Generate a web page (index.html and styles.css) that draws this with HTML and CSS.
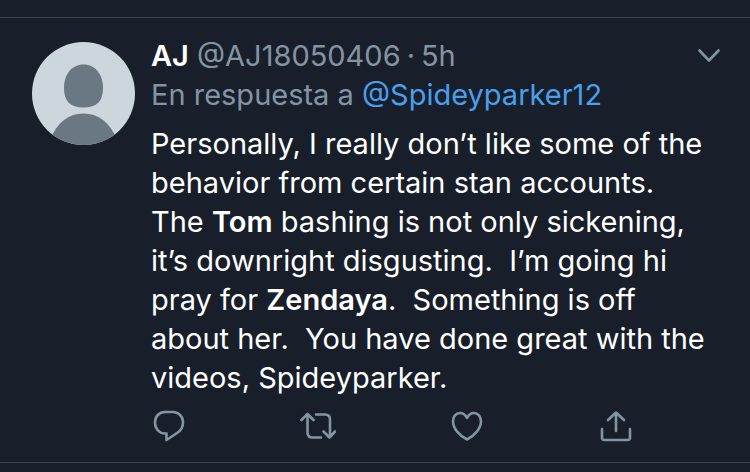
FILE: index.html
```
<!DOCTYPE html>
<html lang="es">

<head>
    <meta charset="utf-8">
    <meta name="viewport" content="width=device-width, initial-scale=1">
    <title>Tweet</title>
    <link rel="stylesheet" href="styles.css">
</head>

<body>
    <article class="tweet">
        <svg class="avatar" viewBox="0 0 103 103" aria-hidden="true">
            <defs>
                <clipPath id="circle">
                    <circle cx="51.5" cy="51.5" r="51.5" />
                </clipPath>
            </defs>
            <g clip-path="url(#circle)">
                <rect width="103" height="103" fill="#ccd6dd" />
                <path fill="#697882" d="M51.500 22.500C63 22.500 71 32 71 46C71 59 65 65.500 51.500 65.500S32 59 32 46C32 32 40 22.500 51.500 22.500Z" />
                <path fill="#697882" d="M18 98C25 80 37 71.500 51.500 71.500S78 80 85 98V103H18Z" />
            </g>
        </svg>
        <div class="content">
            <header class="header">
                <div class="author"><strong>AJ</strong> @AJ18050406<span class="dot">·</span>5h</div>
                <button class="more" type="button" aria-label="Más opciones">
                    <svg width="22" height="14" viewBox="0 0 22 14">
                        <path d="M1.500 1.500L11 11.500L20.500 1.500" />
                    </svg>
                </button>
            </header>
            <div class="reply-to">En respuesta a <a href="#">@Spideyparker12</a></div>
            <p class="text">Personally, I really don’t like some of the<br>
                behavior from certain stan accounts.<br>
                The <strong>Tom</strong> bashing is not only sickening,<br>
                it’s downright disgusting.&nbsp; I’m going hi<br>
                pray for <strong>Zendaya</strong>.&nbsp; Something is off<br>
                about her.&nbsp; You have done great with the<br>
                videos, Spideyparker.</p>
            <div class="actions">
                <button type="button" aria-label="Responder">
                    <svg viewBox="0 0 36 32">
                        <path d="M14 2H22C28 2 32 7 32 12.500C32 17 30 20.500 26 23L15.500 30V23.500H14C8 23.500 4 18.500 4 12.500C4 6.500 8 2 14 2Z" />
                    </svg>
                </button>
                <button type="button" aria-label="Retwittear">
                    <svg viewBox="0 0 36 32">
                        <path d="M1.500 10L7.500 4L13.500 10M7.500 4.500V22.500Q7.500 27.500 12.500 27.500H21M16 4.500H25Q30 4.500 30 9.500V27M23.500 21.500L29.500 27.500L35 21.500" />
                    </svg>
                </button>
                <button type="button" aria-label="Me gusta">
                    <svg viewBox="0 0 36 32">
                        <path d="M18 8C16.500 5 14 3 11 3C7 3 4 6.500 4 11C4 19 11 26 18 29.500C25 26 32 19 32 11C32 6.500 29 3 25 3C22 3 19.500 5 18 8Z" />
                    </svg>
                </button>
                <button type="button" aria-label="Compartir">
                    <svg viewBox="0 0 36 32">
                        <path d="M18 21V2.500M10 10L18 2.500L26 10M4 19V27.500Q4 30 6.500 30H29.500Q32 30 32 27.500V19" />
                    </svg>
                </button>
            </div>
        </div>
    </article>
</body>

</html>
```
FILE: styles.css
```
* {
    box-sizing: border-box;
}

body {
    margin: 0;
    padding-top: 17px;
    background-color: #181f2a;
    color: #ffffff;
    font-family: Inter, "Liberation Sans", sans-serif;
    font-size: 29px;
    line-height: 39px;
}

.tweet {
    display: flex;
    align-items: flex-start;
    gap: 16px;
    padding: 18px 30px 20px 32px;
    border-top: 1px solid #3a444e;
    border-bottom: 1px solid #3a444e;
}

.avatar {
    flex: none;
    width: 103px;
    height: 103px;
    margin-top: 6px;
}

.content {
    flex: 1;
    min-width: 0;
}

.header {
    display: flex;
    justify-content: space-between;
    align-items: center;
}

.author,
.reply-to {
    color: #8494a2;
    white-space: nowrap;
}

.dot {
    margin: 0 6px;
}

strong {
    color: #ffffff;
    font-weight: 600;
}

a {
    color: #4a9fed;
    text-decoration: none;
}

button {
    display: flex;
    padding: 0;
    border: none;
    background: none;
    cursor: pointer;
}

svg {
    fill: none;
    stroke-linecap: round;
    stroke-linejoin: round;
}

button svg {
    stroke: #8494a2;
    stroke-width: 2.6;
}

.text {
    margin: 10px 0 13px;
    white-space: nowrap;
}

.actions {
    display: flex;
    justify-content: space-between;
    padding-right: 86px;
}

.actions svg {
    width: 36px;
    height: 32px;
}
```
